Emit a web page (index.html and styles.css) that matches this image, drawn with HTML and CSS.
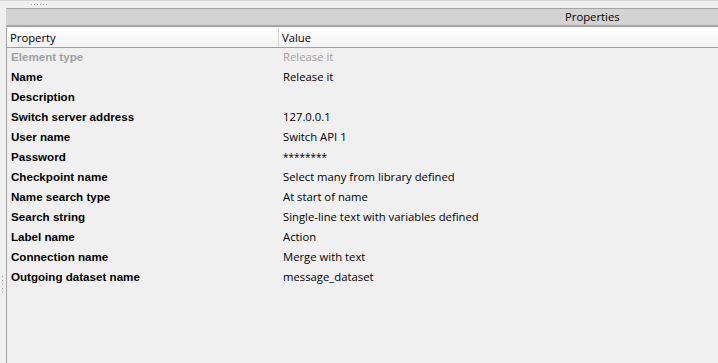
FILE: index.html
```html
<!DOCTYPE html>
<html lang="en">
<head>
    <meta charset="UTF-8">
    <title>Properties</title>
    <link rel="stylesheet" href="styles.css">
</head>
<body>

<div class="top-strip">
    <span class="grip-h"></span>
</div>

<div class="workspace">
    <div class="side-strip">
        <span class="grip-v"></span>
    </div>

    <div class="panel">
        <div class="panel-title">Properties</div>

        <div class="prop-header">
            <div class="col-name">Property</div>
            <div class="col-value">Value</div>
        </div>

        <div class="prop-list">
            <div class="prop-row disabled">
                <div class="col-name">Element type</div>
                <div class="col-value">Release it</div>
            </div>
            <div class="prop-row">
                <div class="col-name">Name</div>
                <div class="col-value">Release it</div>
            </div>
            <div class="prop-row">
                <div class="col-name">Description</div>
                <div class="col-value"></div>
            </div>
            <div class="prop-row">
                <div class="col-name">Switch server address</div>
                <div class="col-value">127.0.0.1</div>
            </div>
            <div class="prop-row">
                <div class="col-name">User name</div>
                <div class="col-value">Switch API 1</div>
            </div>
            <div class="prop-row">
                <div class="col-name">Password</div>
                <div class="col-value password">********</div>
            </div>
            <div class="prop-row">
                <div class="col-name">Checkpoint name</div>
                <div class="col-value">Select many from library defined</div>
            </div>
            <div class="prop-row">
                <div class="col-name">Name search type</div>
                <div class="col-value">At start of name</div>
            </div>
            <div class="prop-row">
                <div class="col-name">Search string</div>
                <div class="col-value">Single-line text with variables defined</div>
            </div>
            <div class="prop-row">
                <div class="col-name">Label name</div>
                <div class="col-value">Action</div>
            </div>
            <div class="prop-row">
                <div class="col-name">Connection name</div>
                <div class="col-value">Merge with text</div>
            </div>
            <div class="prop-row">
                <div class="col-name">Outgoing dataset name</div>
                <div class="col-value">message_dataset</div>
            </div>
        </div>
    </div>
</div>

</body>
</html>
```

FILE: styles.css
```css
body {
    font-family: 'Open Sans', 'DejaVu Sans', sans-serif;
    font-size: 11.3px;
    color: #000;
    background-color: #f0f0f0;
    margin: 0;
    padding: 0;
    height: 363px;
    overflow: hidden;
}

.top-strip {
    height: 7px;
    border-top: 1px solid #d6d6d6;
    position: relative;
}

.grip-h {
    position: absolute;
    left: 31px;
    top: 3px;
    width: 16px;
    height: 1px;
    background-image: repeating-linear-gradient(90deg, #a8a8a8 0 1px, transparent 1px 3px);
}

.workspace {
    display: flex;
    height: 355px;
}

.side-strip {
    width: 6px;
    position: relative;
}

.grip-v {
    position: absolute;
    left: 2px;
    top: 268px;
    width: 1px;
    height: 18px;
    background-image: repeating-linear-gradient(180deg, #a8a8a8 0 1px, transparent 1px 4px);
}

.panel {
    flex: 1;
    display: flex;
    flex-direction: column;
}

.panel-title {
    height: 16px;
    line-height: 16px;
    background-color: #d3d3d3;
    border-top: 1px solid #a5a5a5;
    border-bottom: 2px solid #a5a5a5;
    border-left: 1px solid #d3d3d3;
    padding-left: 558px;
}

.prop-header {
    display: flex;
    height: 19px;
    margin-top: 1px;
    background: linear-gradient(#ffffff, #f2f2f2);
    border-left: 1px solid #a0a0a0;
    border-bottom: 1px solid #a0a0a0;
}

.prop-header .col-name {
    width: 268px;
    border-right: 1px solid #d5d5d5;
    padding-left: 3px;
    line-height: 19px;
}

.prop-header .col-value {
    padding-left: 3px;
    line-height: 19px;
}

.col-name {
    flex: none;
}

.prop-list {
    flex: 1;
    border-left: 1px solid #a0a0a0;
}

.prop-row {
    display: flex;
    height: 20px;
    line-height: 18px;
}

.prop-row .col-name {
    font-family: 'Liberation Sans', Arial, sans-serif;
    font-size: 11.6px;
    font-weight: bold;
    padding-left: 4px;
    width: 269px;
}

.prop-row .col-value {
    padding-left: 3px;
}

.prop-row .col-value.password {
    font-size: 10px;
}

.prop-row.disabled {
    color: #a0a0a0;
}
```
